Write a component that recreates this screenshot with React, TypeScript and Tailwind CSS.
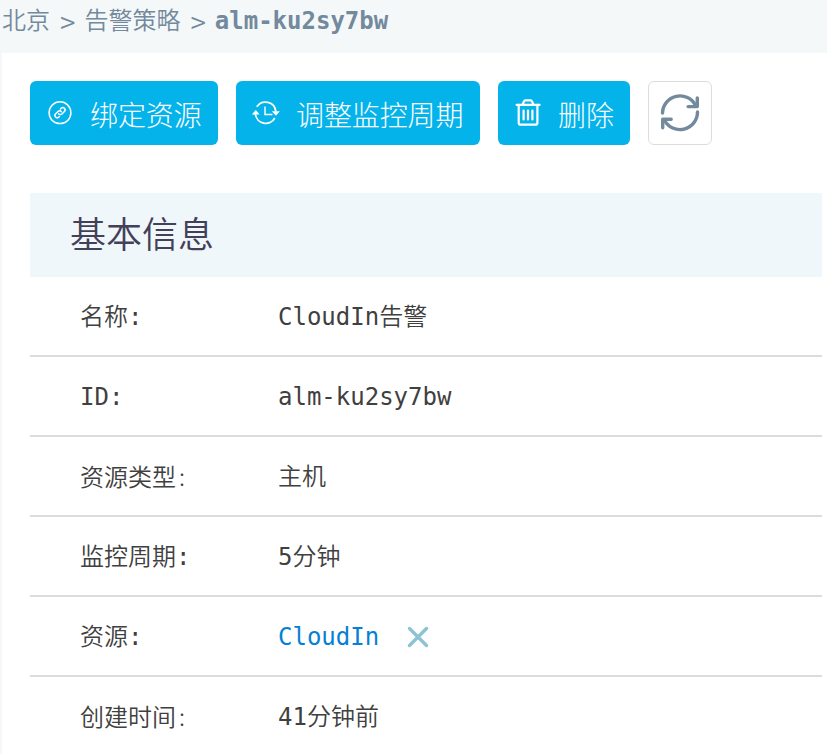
import type { ReactNode } from 'react';

const mono = "font-['DejaVu_Sans_Mono','Noto_Sans_CJK_SC',monospace]";
const cjk = "font-['Noto_Sans_CJK_SC',sans-serif]";

function LinkIcon() {
  return (
    <svg className="h-7 w-7 shrink-0" viewBox="0 0 28 28" fill="none" stroke="white" strokeLinecap="round">
      <circle cx="14" cy="13.7" r="10.9" strokeWidth="1.5" />
      <g strokeWidth="1.5" transform="translate(0 -.3) rotate(-45 14 14)">
        <path d="M11 16.3H10.1a2.3 2.3 0 0 1 0-4.6h3.4a2.3 2.3 0 0 1 2.2 2.6" />
        <path d="M17 11.7h.9a2.3 2.3 0 0 1 0 4.6h-3.4a2.3 2.3 0 0 1-2.2-2.6" />
      </g>
    </svg>
  );
}

function CycleIcon() {
  return (
    <svg className="h-7 w-7 shrink-0" viewBox="0 0 28 28" fill="none" stroke="white" strokeWidth="1.8">
      <path d="M4.8 7.8A10.4 10.4 0 0 1 23.8 12.5" />
      <path d="M22.8 19A10.4 10.4 0 0 1 3.4 15" />
      <path d="M13 7.5v8h7.4" strokeWidth="1.4" />
      <path d="M19.8 12.2h8L24 16.7ZM-.2 15.4h7.8L3.8 11Z" fill="white" stroke="none" />
    </svg>
  );
}

function TrashIcon() {
  return (
    <svg className="h-7 w-7 shrink-0" viewBox="0 0 28 28" fill="none" stroke="white" strokeWidth="2.2" strokeLinecap="round" strokeLinejoin="round">
      <path d="M2.6 5.8h23M8.6 5.4L9.8 2.8q.5-1.4 1.6-1.4h5.2q1.1 0 1.6 1.4L19.4 5.4" />
      <path d="M4.7 5.8V23.7q0 2 2 2h14.7q2 0 2-2V5.8" />
      <path d="M9.6 11.5v9M14 11.5v9M18.4 11.5v9" />
    </svg>
  );
}

function RefreshIcon() {
  return (
    <svg className="h-10 w-10" viewBox="0 0 40 40" fill="none" stroke="#73899d" strokeWidth="3.4" strokeLinecap="round" strokeLinejoin="round">
      <path d="M2.5 20A17.5 17.5 0 0 1 35.6 12.5" />
      <path d="M37.5 19A17.5 17.5 0 0 1 4.4 27" />
      <path d="M37.3 4.9v8.7h-9.2M2.7 34.8v-8.6h8.5" />
    </svg>
  );
}

function Button({ icon, width, children }: { icon: ReactNode; width: string; children: ReactNode }) {
  return (
    <button className={`flex h-16 items-center gap-4 rounded-md bg-[#05b3eb] pl-4 text-[28px] font-light text-white ${width}`}>
      {icon}
      <span className="whitespace-nowrap pt-px leading-8 tracking-[-0.1px]">{children}</span>
    </button>
  );
}

const rows: { label: ReactNode; value: ReactNode }[] = [
  { label: '名称:', value: 'CloudIn告警' },
  { label: 'ID:', value: 'alm-ku2sy7bw' },
  { label: <>资源类型<span className={`ml-[3px] font-light ${cjk}`}>:</span></>, value: '主机' },
  { label: '监控周期:', value: '5分钟' },
  {
    label: '资源:',
    value: (
      <>
        <a className="text-[#0580d4]">CloudIn</a>
        <svg className="ml-7 h-[22px] w-[22px]" viewBox="0 0 22 22" stroke="#8dc3d2" strokeWidth="3.4" strokeLinecap="round">
          <path d="M2.5 2.5l17 17M19.5 2.5l-17 17" />
        </svg>
      </>
    ),
  },
  { label: <>创建时间<span className={`ml-[3px] font-light ${cjk}`}>:</span></>, value: '41分钟前' },
];

export default function App() {
  return (
    <div className={`h-[754px] overflow-hidden bg-[#f5f8f8] ${cjk}`}>
      <nav className={`flex h-[53px] items-start gap-[10px] pl-[2px] pt-[5px] text-2xl leading-8 font-[350] text-[#73899d] ${mono}`}>
        <span>北京</span>
        <span className={`w-[14.4px] text-[28px] leading-8 ${cjk}`}>&gt;</span>
        <span>告警策略</span>
        <span className={`w-[14.4px] text-[28px] leading-8 ${cjk}`}>&gt;</span>
        <span className="font-bold">alm-ku2sy7bw</span>
      </nav>
      <main className="ml-[2px] h-[701px] bg-white pl-7 pr-[5px] pt-7">
        <div className="flex gap-[18px]">
          <Button width="w-[188px]" icon={<LinkIcon />}>绑定资源</Button>
          <Button width="w-[244px]" icon={<CycleIcon />}>调整监控周期</Button>
          <Button width="w-[132px]" icon={<TrashIcon />}>删除</Button>
          <button className="flex h-16 w-16 items-center justify-center rounded-md border border-[#d9dde0] bg-white">
            <RefreshIcon />
          </button>
        </div>
        <h2 className="mt-12 flex h-[84px] items-center bg-[#eff7fb] pb-1.5 pl-10 text-4xl font-[350] text-[#434058]">基本信息</h2>
        <dl className={`text-2xl leading-8 font-[350] text-[#404040] ${mono}`}>
          {rows.map((row, i) => (
            <div key={i} className="flex h-20 items-center border-b-2 border-[#dcdcdc] pl-[50px] pt-0.5">
              <dt className="w-[198px] shrink-0">{row.label}</dt>
              <dd className="flex items-center">{row.value}</dd>
            </div>
          ))}
        </dl>
      </main>
    </div>
  );
}
